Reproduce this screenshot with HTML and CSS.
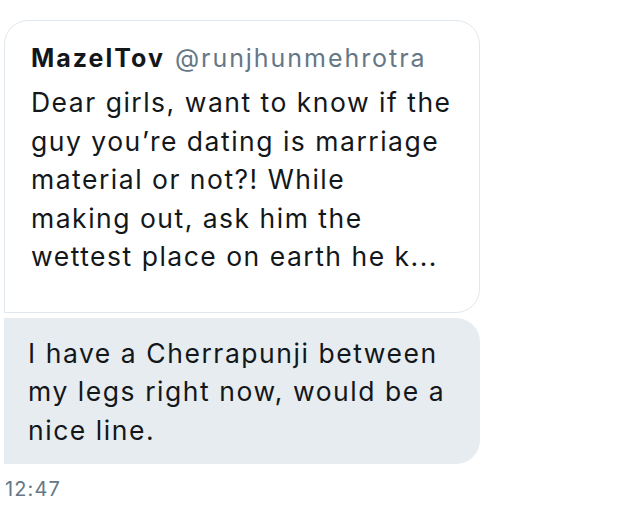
FILE: index.html
```html
<!DOCTYPE html>
<html>
<head>
<meta charset="utf-8">
<link rel="stylesheet" href="styles.css">
</head>
<body>
<div class="thread">
  <div class="quote">
    <div class="author"><span class="name">MazelTov</span> <span class="handle">@runjhunmehrotra</span></div>
    <div class="qtext">Dear girls, want to know if the<br>guy you’re dating is marriage<br>material or not?! While<br>making out, ask him the<br>wettest place on earth he k...</div>
  </div>
  <div class="bubble">I have a Cherrapunji between<br>my legs right now, would be a<br>nice line.</div>
  <div class="time">12:47</div>
</div>
</body>
</html>
```
FILE: styles.css
```css
html, body { margin: 0; padding: 0; background: #fff; }
body { font-family: Inter, "Noto Sans", sans-serif; color: #14171a; }
.thread { padding: 20px 0 0 4px; width: 476px; display: flex; flex-direction: column; }
.quote {
  border: 1px solid #e1e8ed;
  border-radius: 24px 24px 24px 0;
  padding: 22px 10px 36px 26px;
}
.author { font-size: 25px; line-height: 30px; white-space: nowrap; }
.name { font-weight: 700; letter-spacing: 2px; }
.handle { color: #657786; letter-spacing: 1.95px; margin-left: 3px; }
.qtext { font-size: 26.5px; line-height: 38.5px; margin-top: 10px; letter-spacing: 1.5px; white-space: nowrap; }
.bubble {
  margin-top: 5px;
  background: #e6ecf0;
  border-radius: 0 24px 24px 0;
  padding: 16px 10px 15px 24px;
  font-size: 26.5px;
  line-height: 38.5px;
  letter-spacing: 1.55px;
  white-space: nowrap;
}
.time { color: #657786; font-size: 20px; line-height: 24px; margin-top: 13px; padding-left: 1px; letter-spacing: 1.1px; }
```
